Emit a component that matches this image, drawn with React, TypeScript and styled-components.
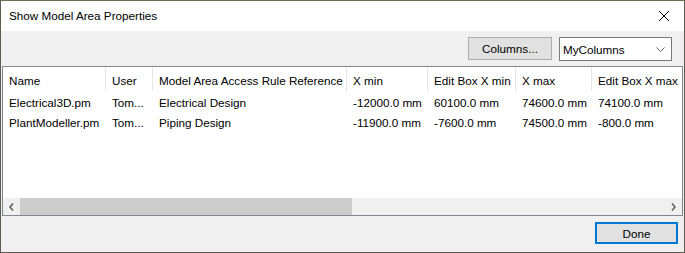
import React, { FC } from "react";
import styled, { createGlobalStyle } from "styled-components";

const GlobalStyle = createGlobalStyle`
  html, body {
    margin: 0;
    padding: 0;
    background: #ffffff;
  }
  body {
    font-family: "Liberation Sans", Arial, sans-serif;
    font-size: 11.7px;
    color: #000000;
  }
`;

const COLUMNS = "103px 47px 194px 81px 88px 76px 110px";

const headers = [
  "Name",
  "User",
  "Model Area Access Rule Reference",
  "X min",
  "Edit Box X min",
  "X max",
  "Edit Box X max",
];

const rows = [
  ["Electrical3D.pm", "Tom...", "Electrical Design", "-12000.0 mm", "60100.0 mm", "74600.0 mm", "74100.0 mm"],
  ["PlantModeller.pm", "Tom...", "Piping Design", "-11900.0 mm", "-7600.0 mm", "74500.0 mm", "-800.0 mm"],
];

const App: FC = () => {
  return (
    <>
      <GlobalStyle />
      <Window>
        <TitleBar>
          <Title>Show Model Area Properties</Title>
          <CloseButton>
            <svg width="12" height="12" viewBox="0 0 12 12">
              <path d="M1 1 L11 11 M11 1 L1 11" stroke="#000" strokeWidth="1" fill="none" />
            </svg>
          </CloseButton>
        </TitleBar>

        <Body>
          <Toolbar>
            <Button width={84}>Columns...</Button>
            <Select>
              <span>MyColumns</span>
              <svg width="9" height="5" viewBox="0 0 9 5">
                <path d="M0.5 0.5 L4.5 4.5 L8.5 0.5" stroke="#606060" strokeWidth="1" fill="none" />
              </svg>
            </Select>
          </Toolbar>

          <ListView>
            <HeaderRow>
              {headers.map((h) => (
                <HeaderCell key={h}>{h}</HeaderCell>
              ))}
            </HeaderRow>
            <Rows>
              {rows.map((r) => (
                <Row key={r[0]}>
                  {r.map((c, i) => (
                    <Cell key={i}>{c}</Cell>
                  ))}
                </Row>
              ))}
            </Rows>
            <ScrollBar>
              <ArrowButton>
                <svg width="5" height="8" viewBox="0 0 5 8">
                  <path d="M4 0.5 L1 4 L4 7.5" stroke="#606060" strokeWidth="1.6" fill="none" />
                </svg>
              </ArrowButton>
              <Track>
                <Thumb />
              </Track>
              <ArrowButton>
                <svg width="5" height="8" viewBox="0 0 5 8">
                  <path d="M1 0.5 L4 4 L1 7.5" stroke="#606060" strokeWidth="1.6" fill="none" />
                </svg>
              </ArrowButton>
            </ScrollBar>
          </ListView>

          <Footer>
            <DefaultButton>Done</DefaultButton>
          </Footer>
        </Body>
      </Window>
    </>
  );
};

export default App;

const Window = styled.div`
  width: 685px;
  height: 253px;
  box-sizing: border-box;
  border: 1px solid #5c5c50;
  border-top-color: #6e6e4a;
  display: flex;
  flex-direction: column;
  background: #f0f0f0;
  overflow: hidden;
`;

const TitleBar = styled.div`
  height: 30px;
  flex-shrink: 0;
  background: #ffffff;
  display: flex;
  align-items: center;
  justify-content: space-between;
  padding-left: 8px;
`;

const Title = styled.div`
  padding-bottom: 1px;
`;

const CloseButton = styled.div`
  width: 46px;
  height: 30px;
  display: flex;
  align-items: center;
  justify-content: center;
  margin-right: -3px;
`;

const Body = styled.div`
  flex: 1;
  display: flex;
  flex-direction: column;
`;

const Toolbar = styled.div`
  height: 35px;
  display: flex;
  justify-content: flex-end;
  align-items: flex-start;
  gap: 7px;
  padding: 6px 12px 0 0;
  box-sizing: border-box;
`;

const Button = styled.div<{ width: number }>`
  width: ${(props) => props.width}px;
  height: 23px;
  box-sizing: border-box;
  border: 1px solid #adadad;
  background: #e1e1e1;
  display: flex;
  align-items: center;
  justify-content: center;
`;

const Select = styled.div`
  width: 113px;
  height: 24px;
  box-sizing: border-box;
  border: 1px solid #7a7a7a;
  background: #ffffff;
  display: flex;
  align-items: center;
  justify-content: space-between;
  padding: 0 6px 0 3px;
`;

const ListView = styled.div`
  height: 150px;
  margin: 0 1px 0 1px;
  box-sizing: border-box;
  border: 1px solid #828790;
  background: #ffffff;
  display: flex;
  flex-direction: column;
  overflow: hidden;
`;

const HeaderRow = styled.div`
  display: grid;
  grid-template-columns: ${COLUMNS};
  height: 24px;
  flex-shrink: 0;
`;

const HeaderCell = styled.div`
  border-right: 1px solid #e5e5e5;
  padding-left: 6px;
  display: flex;
  align-items: center;
  white-space: nowrap;
  overflow: hidden;
  padding-top: 3px;
`;

const Rows = styled.div`
  flex: 1;
  padding-top: 1px;
`;

const Row = styled.div`
  display: grid;
  grid-template-columns: ${COLUMNS};
  height: 20px;
`;

const Cell = styled.div`
  padding-left: 6px;
  display: flex;
  align-items: center;
  white-space: nowrap;
  overflow: hidden;
`;

const ScrollBar = styled.div`
  height: 17px;
  flex-shrink: 0;
  display: flex;
  background: #f0f0f0;
`;

const ArrowButton = styled.div`
  width: 17px;
  display: flex;
  align-items: center;
  justify-content: center;
`;

const Track = styled.div`
  flex: 1;
  display: flex;
`;

const Thumb = styled.div`
  width: 332px;
  height: 100%;
  background: #cdcdcd;
`;

const Footer = styled.div`
  flex: 1;
  display: flex;
  justify-content: flex-end;
  align-items: flex-start;
  padding: 6px 6px 0 0;
`;

const DefaultButton = styled.div`
  width: 83px;
  height: 22px;
  box-sizing: border-box;
  border: 2px solid #0078d7;
  background: #e1e1e1;
  display: flex;
  align-items: center;
  justify-content: center;
`;
